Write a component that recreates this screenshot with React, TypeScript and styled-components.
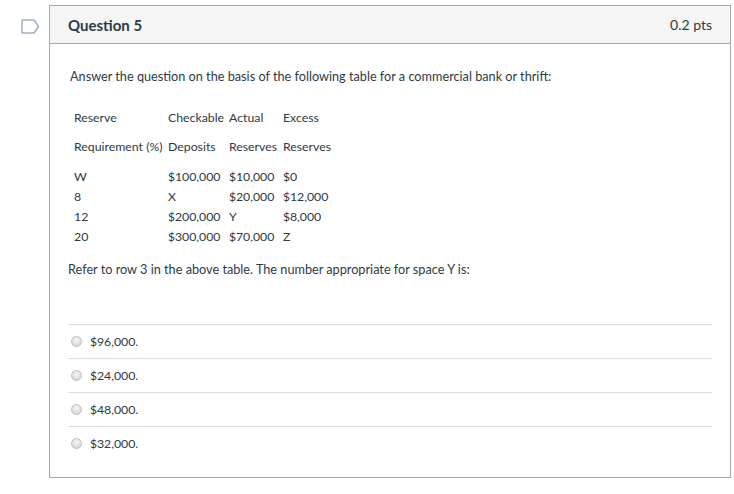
import React from "react";
import styled, { createGlobalStyle } from "styled-components";

const GlobalStyle = createGlobalStyle`
  html, body {
    margin: 0;
    padding: 0;
    background: #ffffff;
  }
  body {
    font-family: Lato, "Open Sans", "Liberation Sans", sans-serif;
    font-feature-settings: "lnum" 1;
    color: #2d3b45;
  }
`;

const rows = [
  ["W", "$100,000", "$10,000", "$0"],
  ["8", "X", "$20,000", "$12,000"],
  ["12", "$200,000", "Y", "$8,000"],
  ["20", "$300,000", "$70,000", "Z"],
];

const answers = ["$96,000.", "$24,000.", "$48,000.", "$32,000."];

const Page = styled.div`
  display: flex;
  align-items: flex-start;
  padding-top: 5px;
`;

const FlagColumn = styled.div`
  width: 49px;
  display: flex;
  justify-content: flex-end;
  padding: 14px 9px 0 0;
  box-sizing: border-box;
`;

const Card = styled.div`
  width: 682px;
  border: 1px solid #a8a8a8;
  box-sizing: border-box;
`;

const Header = styled.div`
  height: 37px;
  background: #f5f5f5;
  border-bottom: 1px solid #a8a8a8;
  display: flex;
  align-items: center;
  justify-content: space-between;
  padding: 0 18px;
`;

const Title = styled.span`
  font-size: 15px;
  font-weight: 700;
  color: #2d3b45;
`;

const Points = styled.span`
  font-size: 14px;
  color: #2d3b45;
`;

const Body = styled.div`
  padding: 23px 18px 17px 18px;
`;

const Prompt = styled.p<{ $indent?: number }>`
  margin: 0;
  font-size: 12.7px;
  line-height: 18px;
  padding-left: ${(p) => p.$indent ?? 0}px;
`;

const Table = styled.table`
  border-collapse: collapse;
  margin: 18px 0 13px 6px;
  font-size: 12.3px;
`;

const HeadCell = styled.td<{ $w: number }>`
  width: ${(p) => p.$w}px;
  padding: 0;
  height: 29px;
  vertical-align: middle;
  white-space: nowrap;
`;

const Cell = styled.td`
  padding: 0;
  height: 20px;
  line-height: 20px;
  white-space: nowrap;
`;

const Spacer = styled.tr`
  height: 6px;
`;

const Answers = styled.div`
  margin-top: 46px;
`;

const AnswerRow = styled.label`
  display: flex;
  align-items: center;
  gap: 8px;
  height: 33px;
  border-top: 1px solid #dcdcdc;
  padding-left: 3px;
  font-size: 12.3px;
  color: #2d3b45;
`;

const Radio = styled.span`
  width: 11px;
  height: 11px;
  border-radius: 50%;
  border: 1px solid #bdbdbd;
  background: radial-gradient(circle at 50% 35%, #f6f6f6 0%, #dadada 75%);
  box-sizing: border-box;
  flex-shrink: 0;
`;

const Flag = () => (
  <svg width="19" height="15" viewBox="0 0 19 15">
    <path
      d="M1 1 H13 L17.5 7.5 L13 14 H1 Z"
      fill="none"
      stroke="#9fb0c2"
      strokeWidth="1.5"
      strokeLinejoin="round"
    />
  </svg>
);

export default function App() {
  return (
    <>
      <GlobalStyle />
      <Page>
        <FlagColumn>
          <Flag />
        </FlagColumn>
        <Card>
          <Header>
            <Title>Question 5</Title>
            <Points>0.2 pts</Points>
          </Header>
          <Body>
            <Prompt $indent={2}>
              Answer the question on the basis of the following table for a
              commercial bank or thrift:
            </Prompt>
            <Table>
              <tbody>
                <tr>
                  <HeadCell $w={94}>Reserve</HeadCell>
                  <HeadCell $w={61}>Checkable</HeadCell>
                  <HeadCell $w={54}>Actual</HeadCell>
                  <HeadCell $w={60}>Excess</HeadCell>
                </tr>
                <tr>
                  <HeadCell $w={94}>Requirement (%)</HeadCell>
                  <HeadCell $w={61}>Deposits</HeadCell>
                  <HeadCell $w={54}>Reserves</HeadCell>
                  <HeadCell $w={60}>Reserves</HeadCell>
                </tr>
                <Spacer />
                {rows.map((r) => (
                  <tr key={r[0]}>
                    {r.map((c, i) => (
                      <Cell key={i}>{c}</Cell>
                    ))}
                  </tr>
                ))}
              </tbody>
            </Table>
            <Prompt>
              Refer to row 3 in the above table. The number appropriate for
              space Y is:
            </Prompt>
            <Answers>
              {answers.map((a) => (
                <AnswerRow key={a}>
                  <Radio />
                  {a}
                </AnswerRow>
              ))}
            </Answers>
          </Body>
        </Card>
      </Page>
    </>
  );
}
